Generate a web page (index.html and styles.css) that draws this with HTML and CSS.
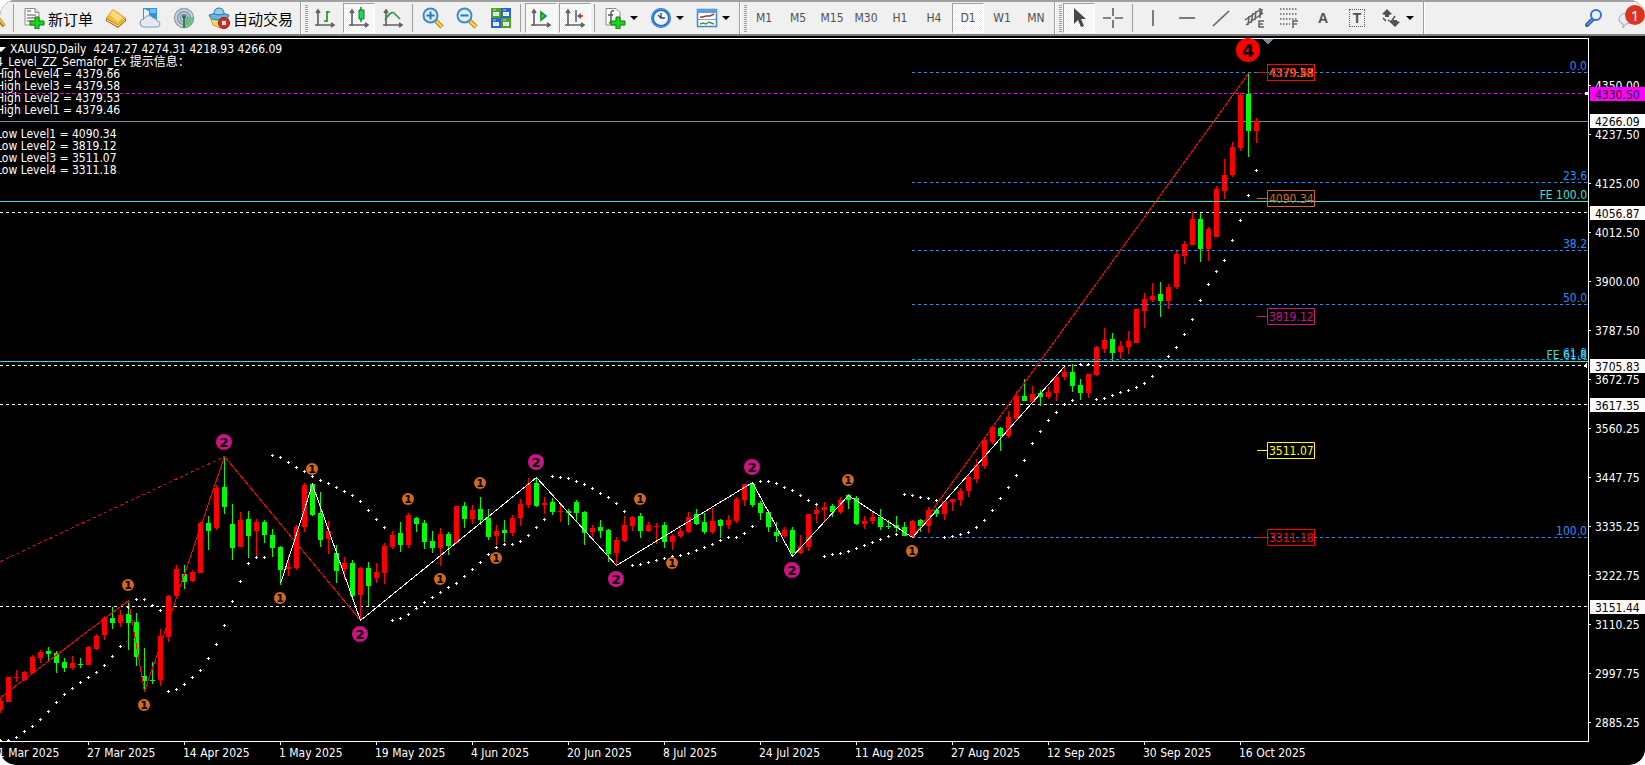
FILE: index.html
```html
<!DOCTYPE html>
<html lang="zh-CN">
<head>
<meta charset="utf-8">
<title>XAUUSD,Daily</title>
<link rel="stylesheet" href="styles.css">
</head>
<body>
<main class="app">
<div class="toolbar" role="toolbar" aria-label="Chart toolbar">
  <button class="cut" aria-label="Find"><svg width="11" height="22" viewBox="0 0 11 22"><path d="M-3 10L4 19" stroke="#a87818" stroke-width="4"/><path d="M-3 9L4 18" stroke="#f0c040" stroke-width="2"/></svg></button>
  <span class="sep"></span>
  <button class="wide order"><svg class="ico" viewBox="0 0 22 22"><path d="M2 1.5h10l4 4V18H2z" fill="#fbfbfb" stroke="#8a8a8a"/><path d="M12 1.5v4h4" fill="#ddd" stroke="#8a8a8a"/><path d="M4 4h4M4 8h9M4 11h9M4 14h6" stroke="#8b8b8b" stroke-width="1.4"/><path d="M12 10h4v4h5v4h-5v4h-4v-4H7v-4h5z" fill="#1fd41f" stroke="#0a7d0a"/></svg><span>新订单</span></button>
  <button class="cell" aria-label="Market"><svg class="ico" viewBox="0 0 22 22"><path d="M8 2l13 9v3l-8 7L1 14v-3z" fill="#a9700c"/><path d="M8 2l13 9-8 7L1 11z" fill="#eebb3c"/><path d="M8 3l10 8-5 4L5 8z" fill="#fbdc7c"/><path d="M2 13l11 6 7-6" stroke="#fff0c0" fill="none"/></svg></button>
  <button class="cell" aria-label="Cloud"><svg class="ico" viewBox="0 0 22 22"><path d="M4 1h14v12H4z" fill="#2c95ea"/><path d="M5 2l5 2v8l-5 1z" fill="#e6f5ff"/><path d="M11 3h6M11 5h6" stroke="#bfe3ff"/><path d="M5 20a4 4 0 0 1 0-8 5 5 0 0 1 9-1 4 4 0 0 1 4 3 3 3 0 0 1 0 6z" fill="#e3eaf6" stroke="#8098c0"/></svg></button>
  <button class="cell" aria-label="Signals"><svg class="ico" viewBox="0 0 22 22"><circle cx="11" cy="11" r="9.5" fill="#d4dbe0" stroke="#98a4ad" stroke-width="1.5"/><circle cx="11" cy="11" r="6.5" fill="#c3ced5" stroke="#8499a8" stroke-width="1.5"/><circle cx="11" cy="11" r="3.5" fill="#dfe9e2" stroke="#6d8d9a" stroke-width="1.2"/><path d="M11 10v11a10 10 0 0 0 10-11z" fill="#58b06d" opacity=".6"/><path d="M11 10v11" stroke="#298a37" stroke-width="2"/><circle cx="11" cy="10" r="2" fill="#286a80"/></svg></button>
  <button class="wide expert"><svg class="ico" viewBox="0 0 22 22"><path d="M2 9l3 9 7 3 8-4V9z" fill="#f6dc66" stroke="#c99a28"/><path d="M1 8q10-4 20 0-1 5-10 5T1 8z" fill="#68b7df" stroke="#287aa7"/><path d="M6 7q0-6 5-6t5 6q-5 2-10 0z" fill="#8dceed" stroke="#287aa7"/><circle cx="16" cy="16" r="5.5" fill="#e12b20" stroke="#a01010"/><path d="M14 14h4v4h-4z" fill="#fff"/></svg><span>自动交易</span></button>
  <span class="edge"></span><span class="grip"></span>
  <button class="cell" aria-label="Bar chart"><svg class="ico line" viewBox="0 0 22 22"><path d="M4 3v16M1 18h19M2 6l2-3 2 3M17 16l3 2-3 2"/><path d="M13 4v11M10 14h3M13 5h3" class="green"/></svg></button>
  <button class="cell on" aria-label="Candlesticks"><svg class="ico line" viewBox="0 0 22 22"><path d="M4 3v16M1 18h19M2 6l2-3 2 3M17 16l3 2-3 2"/><path d="M13 0v15" class="green"/><path d="M11 3h5v9h-5z" fill="#25d45a" stroke="#087b28" stroke-width="1"/></svg></button>
  <button class="cell" aria-label="Line chart"><svg class="ico line" viewBox="0 0 22 22"><path d="M4 3v16M1 18h19M2 6l2-3 2 3M17 16l3 2-3 2"/><path d="M3 13Q10 2 13 7L18 12" stroke="#3a8b4c"/></svg></button>
  <span class="sep"></span>
  <button class="cell" aria-label="Zoom in"><svg class="ico" viewBox="0 0 22 22"><path d="M14 14l6 6" stroke="#a57a10" stroke-width="4.5"/><path d="M14 14l6 6" stroke="#f6d444" stroke-width="2.5"/><circle cx="8.500" cy="8.500" r="7" fill="#d7efff" stroke="#4889bd" stroke-width="2"/><path d="M4.500 8.500h8M8.500 4.500v8" stroke="#2d78ad" stroke-width="2"/></svg></button>
  <button class="cell" aria-label="Zoom out"><svg class="ico" viewBox="0 0 22 22"><path d="M14 14l6 6" stroke="#a57a10" stroke-width="4.500"/><path d="M14 14l6 6" stroke="#f6d444" stroke-width="2.500"/><circle cx="8.500" cy="8.500" r="7" fill="#d7efff" stroke="#4889bd" stroke-width="2"/><path d="M4.500 8.500h8" stroke="#2d78ad" stroke-width="2"/></svg></button>
  <button class="cell" aria-label="Tile windows"><svg class="ico" viewBox="0 0 22 22"><path d="M1 1h10v10H1zM11 11h10v10H11z" fill="#4ba51c"/><path d="M11 1h10v10H11zM1 11h10v10H1z" fill="#2a62cf"/><path d="M3 5h6v4H3zM13 5h6v4h-6zM3 15h6v4H3zM13 15h6v4h-6z" fill="#f2f8ff"/><path d="M3 3h3M13 3h3M3 13h3M13 13h3M4 7h4M14 7h4M4 17h4M14 17h4" stroke="#b6cfee"/></svg></button>
  <span class="sep"></span>
  <button class="cell on" aria-label="Auto scroll"><svg class="ico line" viewBox="0 0 22 22"><path d="M4 3v16M1 18h19M2 6l2-3 2 3M17 16l3 2-3 2"/><path d="M11 5l5 4-5 4z" fill="#39d45b" stroke="#128c2c"/></svg></button>
  <button class="cell on" aria-label="Chart shift"><svg class="ico line" viewBox="0 0 22 22"><path d="M4 3v16M1 18h19M2 6l2-3 2 3M17 16l3 2-3 2"/><path d="M12 3v12" stroke="#2e71a8"/><path d="M19 9h-5" stroke="#b6401a"/><path d="M13 9l4-3v6z" fill="#b6401a" stroke="none"/></svg></button>
  <span class="sep"></span>
  <button class="cell drop" aria-label="Indicators"><svg class="ico" viewBox="0 0 22 22"><path d="M2 1.500h10l4 4V18H2z" fill="#fbfbfb" stroke="#8a8a8a"/><path d="M10 4q-3-1-3 2v8q0 2-2 2M4 8h5" stroke="#555" fill="none" stroke-width="1.400"/><path d="M12 10h4v4h5v4h-5v4h-4v-4H7v-4h5z" fill="#1fd41f" stroke="#0a7d0a"/></svg><i class="caret"></i></button>
  <button class="cell drop" aria-label="Periods"><svg class="ico" viewBox="0 0 22 22"><circle cx="11" cy="11" r="10" fill="#1d69c8"/><circle cx="11" cy="11" r="9" fill="none" stroke="#5aa2ee"/><circle cx="11" cy="11" r="7" fill="#eef5fc"/><path d="M11 6v5h4M8 8l3 3" stroke="#444" fill="none" stroke-width="1.300"/></svg><i class="caret"></i></button>
  <button class="cell drop" aria-label="Templates"><svg class="ico" viewBox="0 0 22 22"><path d="M1.500 2.500h19v17h-19z" fill="#fff" stroke="#4584c8" stroke-width="1.500"/><path d="M1 2h20v4H1z" fill="#5b9ee2"/><path d="M2 12.500h18" stroke="#70a5dc"/><path d="M4 10h3l3-1h4l4-2" stroke="#9b3b25" fill="none" stroke-width="1.500"/><path d="M4 17l3-1 3 1 3-2 2 1 3 1" stroke="#3f9a48" fill="none" stroke-width="1.500"/></svg><i class="caret"></i></button>
  <span class="edge"></span><span class="grip"></span>
  <button class="cell">M1</button><button class="cell">M5</button><button class="cell">M15</button><button class="cell">M30</button><button class="cell">H1</button><button class="cell">H4</button><button class="cell on">D1</button><button class="cell">W1</button><button class="cell">MN</button>
  <span class="edge tight"></span><span class="grip"></span>
  <button class="cell on" aria-label="Cursor"><svg class="ico" viewBox="0 0 22 22"><path d="M6 1v16l4-4 3 7 3-1-3-7h5z" fill="#484848"/></svg></button>
  <button class="cell" aria-label="Crosshair"><svg class="ico line" viewBox="0 0 22 22"><path d="M11 1v8M11 13v8M1 11h8M13 11h8"/></svg></button>
  <span class="sep"></span>
  <button class="cell" aria-label="Vertical line"><svg class="ico line" viewBox="0 0 22 22"><path d="M11 3v16"/></svg></button>
  <button class="cell" aria-label="Horizontal line"><svg class="ico line" viewBox="0 0 22 22"><path d="M3 11h16"/></svg></button>
  <button class="cell" aria-label="Trendline"><svg class="ico line" viewBox="0 0 22 22"><path d="M3 19L19 4"/></svg></button>
  <button class="cell" aria-label="Equidistant channel"><svg class="ico line" viewBox="0 0 22 22"><path d="M1 13L17 2M2 18L19 6M5 9l-1 9M9 6L7 16M12 4l-1 9M16 1v10M18 2l-1 6" stroke-width="1.500"/><path d="M20 14h-5v6h5M15 17h4" stroke-width="1.500"/></svg></button>
  <button class="cell" aria-label="Fibonacci"><svg class="ico line" viewBox="0 0 22 22"><path d="M2 2h17M2 7h17M2 12h17M2 17h10" stroke-dasharray="1.500 1.500" stroke-width="1.500"/><path d="M15 21v-7h5M15 17h4" stroke-width="1.500"/></svg></button>
  <button class="cell bold">A</button>
  <button class="cell" aria-label="Text label"><span class="boxed">T</span></button>
  <button class="cell drop" aria-label="Arrows"><svg class="ico" viewBox="0 0 22 22"><path d="M7 2l5 5-3 1v2H5V8L2 7zM15 20l-5-5 3-1v-1h4v1l3 1z" fill="#505050"/><path d="M3 11l3 3M8 13l3 2 4-6" stroke="#505050" stroke-width="1.500" fill="none"/></svg><i class="caret"></i></button>
  <span class="edge"></span>
  <span class="fill"></span>
  <button class="cell" aria-label="Search"><svg class="ico" viewBox="0 0 22 22"><path d="M10 12l-6 6" stroke="#2856b0" stroke-width="4" stroke-linecap="round"/><path d="M10 12l-6 6" stroke="#6b9cf0" stroke-width="1.500"/><circle cx="13" cy="8" r="5" fill="#eaf4ff" stroke="#3f6fca" stroke-width="2"/></svg></button>
  <button class="cell chat" aria-label="Messages"><svg class="ico" viewBox="0 0 22 22"><path d="M3 9q3-4 9-2l4 5-1 4-6 1-3 4v-4q-6-2-3-8z" fill="#e8eaef" stroke="#a1a5ac"/></svg><span class="badge">1</span></button>
</div>
<section class="chart" aria-label="XAUUSD daily chart">
  <svg class="plot" id="plot"></svg>
  <div class="info">
    <p class="title"><i class="flag"></i>XAUUSD,Daily&nbsp; 4247.27 4274.31 4218.93 4266.09</p>
    <p class="name">4_Level_ZZ_Semafor_Ex <span class="cjk">提示信息：</span></p>
    <p>High Level4 = 4379.66<br>High Level3 = 4379.58<br>High Level2 = 4379.53<br>High Level1 = 4379.46</p>
    <p class="low">Low Level1 = 4090.34<br>Low Level2 = 3819.12<br>Low Level3 = 3511.07<br>Low Level4 = 3311.18</p>
  </div>
</section>
</main>
<script src="chart.js"></script>
</body>
</html>
```

FILE: styles.css
```css
* { box-sizing: border-box; }
body { margin: 0; background: #fff; font: 12px "DejaVu Sans Condensed", "Noto Sans", "Noto Sans CJK SC", sans-serif; }
p { margin: 0; }
.app { width: 100%; overflow: hidden; border-radius: 16px; background: #000; }
.toolbar {
  display: flex; align-items: center; height: 36px; overflow: hidden;
  background: #f0f0f0; border-top: 2px solid #a0a0a0; border-bottom: 2px solid #808080;
}
button { flex: none; display: flex; align-items: center; justify-content: center; height: 30px; margin: 0; padding: 0; border: 0; background: none; color: #505050; font: inherit; }
.ico { display: block; flex: none; width: 22px; height: 22px; }
.line { fill: none; stroke: #606060; stroke-width: 1.6; }
.green { stroke: #149030; }
.cell { width: 34px; }
.cut { width: 11px; }
.on {
  width: 32px; margin: 0 1px; border: 1px solid #a0a0a0; border-right-color: #fff; border-bottom-color: #fff;
  background: repeating-conic-gradient(#fff 0 25%, #f0f0f0 0 50%) 0 0 / 2px 2px;
}
.wide { justify-content: flex-start; gap: 3px; padding-left: 7px; color: #000; font: 15px "Noto Sans CJK SC", sans-serif; white-space: nowrap; }
.order { width: 82px; padding-left: 6px; }
.expert { width: 96px; }
.drop { width: 46px; gap: 4px; }
.caret { border: 4px solid transparent; border-top-color: #000; border-bottom: 0; }
.bold { font: bold 14px "Liberation Sans", sans-serif; }
.boxed { width: 16px; border: 1px dotted #606060; font: bold 14px/16px "Liberation Sans", sans-serif; }
.sep { flex: none; width: 1px; height: 28px; margin: 0 3px 0 2px; background: #a0a0a0; }
.edge { flex: none; width: 2px; height: 32px; margin-left: 3px; background: #a0a0a0; border-right: 1px solid #fff; }
.tight { margin-left: 1px; }
.grip { flex: none; width: 3px; height: 27px; margin: 0 0 0 3px; background: repeating-linear-gradient(#a0a0a0 0 1px, #f0f0f0 1px 2px); }
.fill { flex: 1; }
.chat { position: relative; }
.badge { position: absolute; right: 0; top: 2px; width: 20px; height: 20px; border-radius: 50%; background: #dc3420; color: #fff; font: 15px/20px "Noto Sans", sans-serif; text-align: center; }
.chart { position: relative; overflow: hidden; color: #fff; }
.plot { display: block; width: 100%; }
.plot text { font: 12px "DejaVu Sans Condensed", "Noto Sans", sans-serif; }
.plot .num { font-family: "DejaVu Sans", sans-serif; font-weight: bold; text-anchor: middle; fill: #000; }
.plot .s { font-size: 11px; }
.plot .m { font-size: 13px; }
.plot .l { font-size: 18px; }
.info { position: absolute; left: -4px; top: 7px; line-height: 12px; white-space: nowrap; }
.title { display: flex; align-items: center; }
.flag { margin-right: 4px; border: 5px solid transparent; border-top-color: #fff; border-bottom: 0; }
.name { height: 13px; }
.cjk { font-family: "Noto Sans CJK SC", sans-serif; }
.low { margin-top: 12px; }
```

FILE: chart.js
```js
// Candles: high, body top, body bottom, low; u = up (red), d = down (green).
const candles = `698 701 710 713 u,677 677 702 702 u,670 677 678 682 u,671 672 680 681 u,655 657 673 673 u,650 652 658 663 u,647 651 654 662 d,651 653 663 673 d,658 662 668 672 d,656 663 668 670 u,658 664 665 668 d,646 647 665 665 u,634 636 649 650 u,616 618 635 640 u,607 618 623 629 d,610 615 623 627 u,602 614 623 650 d,613 622 657 666 d,648 676 681 690 d,662 680 681 684 d,629 636 680 686 u,595 596 637 642 u,565 569 596 599 u,565 574 582 589 d,570 572 581 582 u,522 523 573 573 u,516 523 531 550 d,485 488 528 530 u,457 487 507 514 d,504 524 548 560 d,512 520 547 547 u,511 519 536 558 d,519 522 531 556 u,520 522 535 543 d,529 535 548 557 d,546 547 570 585 d,555 567 569 576 u,525 527 568 570 u,483 485 527 532 u,483 484 515 516 d,492 513 540 547 d,521 531 539 554 u,545 553 571 583 d,557 563 569 579 u,560 563 596 600 d,567 568 595 620 u,562 568 586 606 d,563 572 578 583 u,543 546 573 584 u,531 535 547 549 u,522 533 545 552 d,513 515 545 548 u,517 518 524 532 d,520 523 542 549 d,531 541 548 553 d,528 534 548 566 u,532 534 546 555 d,506 506 543 544 u,502 506 519 528 d,505 510 519 524 u,497 509 520 525 d,509 518 537 540 d,525 531 536 545 u,520 530 533 542 d,515 518 533 536 u,499 504 518 526 u,478 484 505 508 u,477 483 506 507 d,497 503 505 514 u,498 502 512 515 d,504 511 512 522 u,509 511 513 525 d,500 502 513 522 d,511 512 533 545 d,525 528 532 537 u,520 527 531 538 d,529 530 554 562 d,537 540 553 565 u,516 525 541 542 u,516 517 526 531 u,513 516 531 538 d,522 525 531 532 u,523 526 527 544 u,522 525 542 548 d,534 536 542 550 u,528 531 536 538 u,512 517 532 533 u,509 514 524 525 d,513 522 532 534 d,508 521 532 534 u,519 520 526 538 d,515 520 525 529 u,497 499 521 523 u,484 484 500 506 u,482 484 505 507 d,501 503 513 520 d,510 512 527 532 d,522 532 536 542 d,527 530 536 538 u,527 530 553 556 d,535 546 553 554 u,514 514 547 551 u,506 510 514 523 u,502 507 510 521 u,504 506 512 517 d,497 500 512 514 u,494 495 500 509 d,496 498 524 525 d,516 521 524 529 u,511 517 521 524 u,509 517 527 530 d,520 526 527 529 d,516 525 528 532 d,522 527 536 536 d,520 521 537 537 u,519 520 526 532 d,507 510 526 533 u,508 510 514 517 d,501 501 514 520 u,499 499 502 511 u,488 491 500 506 u,475 477 491 497 u,459 465 479 483 u,439 440 466 469 u,426 427 442 444 u,427 428 436 451 d,411 417 436 438 u,391 396 419 420 u,379 396 401 401 d,386 394 402 402 u,390 393 397 406 d,387 392 397 399 u,374 377 393 401 u,366 372 377 380 u,364 372 386 392 d,379 385 393 400 d,374 374 393 398 u,346 347 375 376 u,328 340 349 353 u,333 339 353 361 d,341 346 352 359 u,331 341 347 354 u,309 309 343 343 u,293 299 311 328 u,283 296 300 302 u,282 294 301 317 d,284 287 301 309 u,251 254 287 289 u,241 244 256 264 u,211 219 245 245 u,213 219 249 262 d,227 229 249 261 u,186 189 237 237 u,159 175 191 199 u,142 147 175 177 u,93 95 148 151 u,73 94 131 157 d,118 121 131 143 u`
  .split(',').map(row => row.split(' '));

// Parabolic SAR, one value per candle.
const sar = [740,740,737,731,726,719,711,702,694,688,682,677,672,665,656,646,607,599,599,605,610,691,689,684,677,670,658,644,625,601,581,563,557,557,455,457,462,467,471,476,480,483,487,491,495,501,510,519,527,620,618,614,608,602,597,592,587,583,576,569,562,554,547,544,544,541,535,527,519,476,477,478,481,484,488,493,497,503,511,565,564,562,560,558,556,555,553,550,547,544,540,537,537,533,526,481,481,483,487,490,495,500,504,556,554,553,551,548,545,542,539,536,534,494,495,497,498,500,537,536,534,532,527,520,510,498,487,475,460,443,431,420,412,404,400,364,364,399,398,395,392,390,387,383,376,366,356,347,334,319,300,284,271,260,240,220,195,170];

const ones = [[128,585],[144,705],[280,598],[312,469],[408,499],[440,579],[480,483],[496,558],[640,499],[672,563],[848,480],[912,551]];
const twos = [[224,442],[360,634],[536,462],[616,579],[752,467],[792,570]];
const fibs = [[72,'0.0'],[182,'23.6'],[250,'38.2'],[304,'50.0'],[359,'61.8'],[537,'100.0']];
const prices = [[85,'4350.00'],[134,'4237.50'],[183,'4125.00'],[232,'4012.50'],[281,'3900.00'],[330,'3787.50'],[379,'3672.75'],[428,'3560.25'],[477,'3447.75'],[526,'3335.25'],[575,'3222.75'],[624,'3110.25'],[673,'2997.75'],[722,'2885.25']];
const tags = [[93,'4330.50','#f0f'],[120,'4266.09','#fff'],[212,'4056.87','#fffafa'],[365,'3705.83','#fffafa'],[404,'3617.35','#fffafa'],[606,'3151.44','#fffafa']];
const levels = [[72,'4379.46','#d2691e'],[72,'4379.53','#c71585'],[72,'4379.58','#ff0'],[72,'4379.66','#f00'],[198,'4090.34','#d2691e'],[316,'3819.12','#c71585'],[450,'3511.07','#ff0'],[537,'3311.18','#f00']];
const dates = ['11 Mar 2025','27 Mar 2025','14 Apr 2025','1 May 2025','19 May 2025','4 Jun 2025','20 Jun 2025','8 Jul 2025','24 Jul 2025','11 Aug 2025','27 Aug 2025','12 Sep 2025','30 Sep 2025','16 Oct 2025'];

const TOP = 36, BOTTOM = 741, STEP = 8;
const plot = document.getElementById('plot');

function rect(x, y, w, h, fill) { return `<rect x="${x}" y="${y}" width="${w}" height="${h}" fill="${fill}"/>`; }
function row(x1, x2, y, color, dashed) {
  return `<path d="M${x1} ${y + .5}H${x2}" stroke="${color}"${dashed ? ' stroke-dasharray="3 3"' : ''}/>`;
}
function path(points, color, dash) {
  return `<polyline points="${points}" transform="translate(.5 .5)" fill="none" stroke="${color}"${dash ? ` stroke-dasharray="${dash}"` : ''}/>`;
}
function label(x, y, text, color, anchor) { return `<text x="${x}" y="${y}" fill="${color}"${anchor ? ` text-anchor="${anchor}"` : ''}>${text}</text>`; }
function mark([x, y], r, text, color, size) {
  const drop = { s: 4, m: 5, l: 7 }[size];
  return `<circle cx="${x}" cy="${y}" r="${r}" fill="${color}"/><text class="num ${size}" x="${x}" y="${y + drop}">${text}</text>`;
}

function draw() {
  const width = plot.parentNode.clientWidth;
  const axis = width - 57;
  const crisp = [], over = [];
  plot.setAttribute('height', 765 - TOP);

  crisp.push(row(0, axis, 121, '#778899'));
  [212, 365, 404, 606].forEach(y => crisp.push(row(0, axis - 1, y, '#fff', true)));
  crisp.push(row(0, axis - 1, 93, '#f0f', true));

  candles.forEach(([high, top, bottom, low, dir], i) => {
    const color = dir === 'u' ? '#f00' : '#0f0';
    crisp.push(rect(i * STEP, +high, 1, low - high, color));
    crisp.push(rect(i * STEP - 2, +top, 5, bottom - top, color));
  });
  fibs.forEach(([y]) => crisp.push(row(912, axis - 1, y, '#1e90ff', true)));
  [201, 361].forEach(y => crisp.push(row(0, axis, y, '#40e0d0')));
  sar.forEach((y, i) => crisp.push(rect(i * STEP - 1, y, 3, 1, '#fff') + rect(i * STEP, y - 1, 1, 3, '#fff')));

  crisp.push(path('0,561 224,456', '#f00', '3 3'));
  crisp.push(path('0,697 128,600 144,691 224,456 360,620', '#f00'));
  crisp.push(path('912,537 1248,73', '#f00'));
  crisp.push(path('280,583 312,484 360,620 536,477 616,565 752,482 792,556 848,495 912,537 1064,366', '#fff'));
  crisp.push('<path d="M1262 39h11l-5 5h-1z" fill="#778899"/>');

  crisp.push(row(0, axis + 1, 38, '#fff'), row(0, axis + 1, BOTTOM, '#fff'), rect(axis, 38, 1, BOTTOM - 38, '#fff'));
  prices.forEach(([y]) => crisp.push(rect(axis + 1, y, 2, 1, '#fff')));
  dates.forEach((d, k) => crisp.push(rect(96 * k - 8, BOTTOM + 1, 1, 3, '#fff')));
  crisp.push(rect(axis - 3, 92, 3, 3, '#fff'), `<path d="M${axis - 5} 366l4-4v6z" fill="#fff"/>`);

  fibs.forEach(([y, t]) => over.push(label(axis - 1, y - 2, t, '#1e90ff', 'end')));
  over.push(label(axis - 1, 199, 'FE 100.0', '#40e0d0', 'end'), label(axis - 1, 359, 'FE 61.8', '#40e0d0', 'end'));
  prices.forEach(([y, t]) => over.push(label(axis + 7, y + 5, t, '#fff')));
  tags.forEach(([y, t, bg]) => over.push(rect(axis + 2, y - 6, 55, 14, bg), label(axis + 7, y + 6, t, '#000')));
  levels.forEach(([y, t, c]) => over.push(
    `<path d="M1257 ${y + .5}h10M1267.5 ${y - 7.5}h47v16h-47z" stroke="${c}" fill="none"/>`, label(1269, y + 5, t, c)));
  dates.forEach((d, k) => over.push(label(96 * k - 9, 757, d, '#fff')));
  ones.forEach(p => over.push(mark(p, 6, '1', '#d2691e', 's')));
  twos.forEach(p => over.push(mark(p, 8, '2', '#c71585', 'm')));
  over.push(mark([1248, 50], 12, '4', '#f00', 'l'));

  plot.innerHTML = `<g transform="translate(0 -${TOP})"><g shape-rendering="crispEdges">${crisp.join('')}</g>${over.join('')}</g>`;
}
draw();
addEventListener('resize', draw);
```
